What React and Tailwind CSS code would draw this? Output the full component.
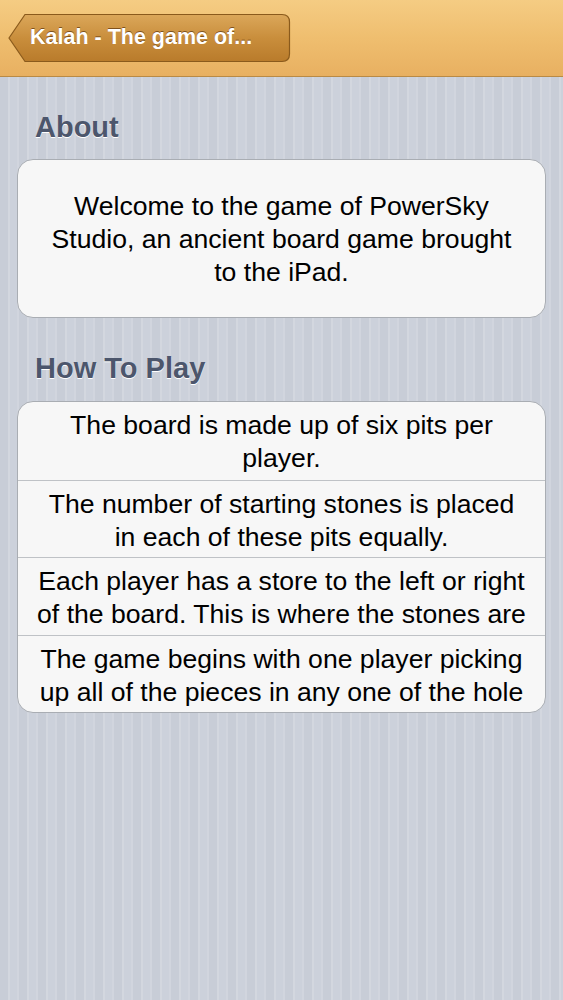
export default function App() {
  const rows = [
    "The board is made up of six pits per player.",
    "The number of starting stones is placed in\u00a0each of these pits equally.",
    "Each player has a store to the left or right of the board. This is where the stones are",
    "The game begins with one player picking up all of the pieces in any one of the hole",
  ];

  return (
    <div
      className="min-h-[1000px] w-[563px] bg-[repeating-linear-gradient(90deg,#c8cdd7_0px,#c8cdd7_8px,#d3d7df_8px,#d3d7df_10px,#ccd1db_10px,#ccd1db_17px,#d1d5de_17px,#d1d5de_19px)]"
      style={{ fontFamily: '"Liberation Sans", Arial, sans-serif' }}
    >
      {/* nav bar */}
      <div className="h-[77px] flex items-center pl-[8px] bg-gradient-to-b from-[#f5cc83] via-[#efbe6f] to-[#e8b061] border-b border-[#b98a45]">
        <button className="relative h-[50px] w-[283px] mt-[-1px] flex items-center">
          <svg
            className="absolute inset-0"
            width="283"
            height="50"
            viewBox="0 0 283 50"
          >
            <defs>
              <linearGradient id="bb" x1="0" y1="0" x2="0" y2="1">
                <stop offset="0" stopColor="#dba75a" />
                <stop offset="0.5" stopColor="#c98e3c" />
                <stop offset="1" stopColor="#b97b2b" />
              </linearGradient>
            </defs>
            <path
              d="M1 25 L17 1.5 H274 Q281.5 1.5 281.5 9 V41 Q281.5 48.5 274 48.5 H17 Z"
              fill="url(#bb)"
              stroke="#8a5a1c"
              strokeWidth="1.2"
            />
          </svg>
          <span className="relative pl-[22px] text-white font-bold text-[21.5px] [text-shadow:0_-1px_0_rgba(90,50,10,0.7)]">
            Kalah - The game of...
          </span>
        </button>
      </div>

      <div className="px-[17px]">
        <h2 className="pt-[33px] pl-[18px] text-[29px] leading-[34px] font-bold text-[#4c566c] [text-shadow:0_1px_0_#ffffff]">
          About
        </h2>
        <div className="mt-[15px] h-[159px] rounded-[16px] border border-[#a9adb3] bg-[#f7f7f7] pt-[30px] px-[25px] text-center text-[26.6px] leading-[33px] text-black">
          Welcome to the game of PowerSky Studio, an ancient board game brought to the iPad.
        </div>

        <h2 className="pt-[33px] pl-[18px] text-[29px] leading-[34px] font-bold text-[#4c566c] [text-shadow:0_1px_0_#ffffff]">
          How To Play
        </h2>
        <div className="mt-[16px] rounded-[16px] border border-[#a9adb3] bg-[#f7f7f7] overflow-hidden">
          {rows.map((t, i) => (
            <div
              key={i}
              className={
                "h-[77.5px] overflow-hidden px-[12px] pt-[7px] text-center text-[26.6px] leading-[33px] text-black" +
                (i > 0 ? " border-t border-[#bfc2c6]" : "")
              }
            >
              {t}
            </div>
          ))}
        </div>
      </div>
    </div>
  );
}
